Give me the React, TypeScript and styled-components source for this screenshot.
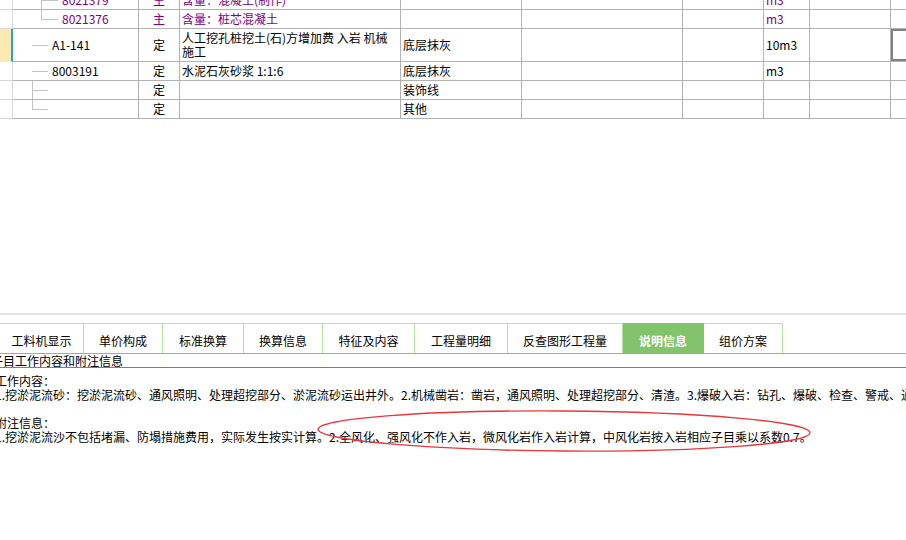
import React from 'react';
import styled, { createGlobalStyle } from 'styled-components';

const GlobalStyle = createGlobalStyle`
  html, body {
    margin: 0;
    padding: 0;
    background: #fff;
  }
  body {
    font-family: "Noto Sans CJK SC", "Liberation Sans", sans-serif;
    font-size: 12px;
    color: #000;
    overflow: hidden;
  }
`;

// last column runs past the window edge, as in a scrolled grid
const COLS = '13px 126px 41px 221px 121px 161px 81px 46px 81px 40px';

const Page = styled.div`
  width: 906px;
  height: 540px;
  display: flex;
  flex-direction: column;
  overflow: hidden;
  background: #fff;
`;

const GridArea = styled.div`
  height: 315px;
  box-sizing: border-box;
  border-bottom: 2px solid #e3e3e3;
  overflow: hidden;
  flex-shrink: 0;
`;

const Table = styled.div`
  margin-top: -9px;
  width: 931px;
`;

const Row = styled.div<{ $h: number }>`
  display: grid;
  grid-template-columns: ${COLS};
  height: ${p => p.$h}px;
`;

const Cell = styled.div<{ $purple?: boolean; $center?: boolean; $focus?: boolean }>`
  box-sizing: border-box;
  border-right: 1px solid #b2b2b2;
  border-bottom: 1px solid #b2b2b2;
  display: flex;
  align-items: center;
  justify-content: ${p => (p.$center ? 'center' : 'flex-start')};
  padding: 0 2px;
  overflow: hidden;
  white-space: nowrap;
  line-height: 14px;
  color: ${p => (p.$purple ? '#800080' : '#000')};
  box-shadow: ${p => (p.$focus ? 'inset 0 0 0 2px #808080' : 'none')};
`;

const MarkCell = styled.div<{ $selected?: boolean }>`
  box-sizing: border-box;
  border-bottom: 1px solid ${p => (p.$selected ? '#fde9b2' : '#d6d6d6')};
  border-right: ${p => (p.$selected ? '2px solid #2b9fd8' : '1px solid #d6d6d6')};
  background: ${p => (p.$selected ? '#fde9b2' : '#fff')};
`;

const CodeCell = styled(Cell)<{ $indent: number }>`
  padding-left: ${p => p.$indent}px;
  align-items: stretch;
`;

const NameCell = styled(Cell)`
  white-space: normal;
`;

const Branch = styled.span<{ $w: number; $kind: 'tee' | 'elbow' | 'dash' }>`
  position: relative;
  flex-shrink: 0;
  width: ${p => p.$w}px;
  margin-right: 4px;

  &::before {
    content: '';
    display: ${p => (p.$kind === 'dash' ? 'none' : 'block')};
    position: absolute;
    left: 0;
    top: 0;
    width: 1px;
    bottom: ${p => (p.$kind === 'elbow' ? '50%' : '0')};
    background: #c3c3c3;
  }

  &::after {
    content: '';
    position: absolute;
    left: 0;
    right: 0;
    top: 50%;
    height: 1px;
    background: #c3c3c3;
  }
`;

const CodeText = styled.span`
  align-self: center;
`;

const TabBar = styled.div`
  display: flex;
  margin-top: 8px;
  border-bottom: 1px solid #82c46c;
  flex-shrink: 0;
`;

const Tab = styled.div<{ $w: number; $active?: boolean }>`
  box-sizing: border-box;
  width: ${p => p.$w}px;
  height: 30px;
  padding-top: 3px;
  display: flex;
  align-items: center;
  justify-content: center;
  font-size: 12px;
  cursor: pointer;
  border-top: 1px solid ${p => (p.$active ? '#82c46c' : '#b6e3a1')};
  border-right: 1px solid ${p => (p.$active ? '#82c46c' : '#b6e3a1')};
  background: ${p => (p.$active ? '#82c46c' : '#fff')};
  color: ${p => (p.$active ? '#fff' : '#000')};
  font-weight: ${p => (p.$active ? 700 : 400)};
`;

const Heading = styled.div`
  box-sizing: border-box;
  height: 14px;
  border-bottom: 1px solid #808080;
  line-height: 13px;
  white-space: nowrap;
  overflow: hidden;
  flex-shrink: 0;

  span {
    display: inline-block;
    margin-left: -9px;
  }
`;

const Content = styled.div`
  position: relative;
  flex: 1;
  padding-top: 6px;
  overflow: hidden;
`;

const Block = styled.div`
  margin-left: -5px;
  line-height: 14px;
  white-space: nowrap;

  & + & {
    margin-top: 14px;
  }
`;

const Mark = styled.svg`
  position: absolute;
  left: 0;
  top: 0;
  pointer-events: none;
  overflow: visible;
`;

interface GridRow {
  h: number;
  purple?: boolean;
  selected?: boolean;
  indent: number;
  branchW: number;
  kind: 'tee' | 'elbow' | 'dash';
  code: string;
  type: string;
  name: React.ReactNode;
  part: string;
  unit: string;
}

const rows: GridRow[] = [
  { h: 19, purple: true, indent: 28, branchW: 17, kind: 'tee', code: '8021379', type: '主', name: '含量：混凝土(制作)', part: '', unit: 'm3' },
  { h: 19, purple: true, indent: 28, branchW: 17, kind: 'elbow', code: '8021376', type: '主', name: '含量：桩芯混凝土', part: '', unit: 'm3' },
  {
    h: 33, selected: true, indent: 19, branchW: 16, kind: 'dash', code: 'A1-141', type: '定',
    name: <>人工挖孔桩挖土(石)方增加费 入岩 机械<br />施工</>, part: '底层抹灰', unit: '10m3',
  },
  { h: 19, indent: 19, branchW: 16, kind: 'dash', code: '8003191', type: '定', name: '水泥石灰砂浆 1:1:6', part: '底层抹灰', unit: 'm3' },
  { h: 19, indent: 19, branchW: 16, kind: 'tee', code: '', type: '定', name: '', part: '装饰线', unit: '' },
  { h: 19, indent: 19, branchW: 16, kind: 'elbow', code: '', type: '定', name: '', part: '其他', unit: '' },
];

const tabs: [string, number][] = [
  ['工料机显示', 84],
  ['单价构成', 79],
  ['标准换算', 81],
  ['换算信息', 79],
  ['特征及内容', 92],
  ['工程量明细', 93],
  ['反查图形工程量', 115],
  ['说明信息', 81],
  ['组价方案', 79],
];

const App: React.FC = () => {
  const [activeTab, setActiveTab] = React.useState('说明信息');

  return (
    <Page>
      <GlobalStyle />
      <GridArea>
        <Table>
          {rows.map((r, i) => (
            <Row key={i} $h={r.h}>
              <MarkCell $selected={r.selected} />
              <CodeCell $indent={r.indent} $purple={r.purple}>
                <Branch $w={r.branchW} $kind={r.kind} />
                <CodeText>{r.code}</CodeText>
              </CodeCell>
              <Cell $center $purple={r.purple}>{r.type}</Cell>
              <NameCell $purple={r.purple}>
                <div>{r.name}</div>
              </NameCell>
              <Cell>{r.part}</Cell>
              <Cell />
              <Cell />
              <Cell $purple={r.purple}>{r.unit}</Cell>
              <Cell />
              <Cell $focus={r.selected} />
            </Row>
          ))}
        </Table>
      </GridArea>

      <TabBar>
        {tabs.map(([label, w]) => (
          <Tab key={label} $w={w} $active={label === activeTab} onClick={() => setActiveTab(label)}>
            {label}
          </Tab>
        ))}
      </TabBar>

      <Heading>
        <span>子目工作内容和附注信息</span>
      </Heading>

      <Content>
        <Block>
          <div>工作内容：</div>
          <div>
            1.挖淤泥流砂：挖淤泥流砂、通风照明、处理超挖部分、淤泥流砂运出井外。2.机械凿岩：凿岩，通风照明、处理超挖部分、清渣。3.爆破入岩：钻孔、爆破、检查、警戒、通风照明、清渣。
          </div>
        </Block>
        <Block>
          <div>附注信息：</div>
          <div>
            1.挖淤泥流沙不包括堵漏、防塌措施费用，实际发生按实计算。2.全风化、强风化不作入岩，微风化岩作入岩计算，中风化岩按入岩相应子目乘以系数0.7。
          </div>
        </Block>
        <Mark width="906" height="120" viewBox="0 0 906 120">
          <ellipse
            cx="564"
            cy="63"
            rx="246"
            ry="20"
            fill="none"
            stroke="#e8363c"
            strokeWidth="1.4"
            transform="rotate(0.4 564 63)"
          />
        </Mark>
      </Content>
    </Page>
  );
};

export default App;
